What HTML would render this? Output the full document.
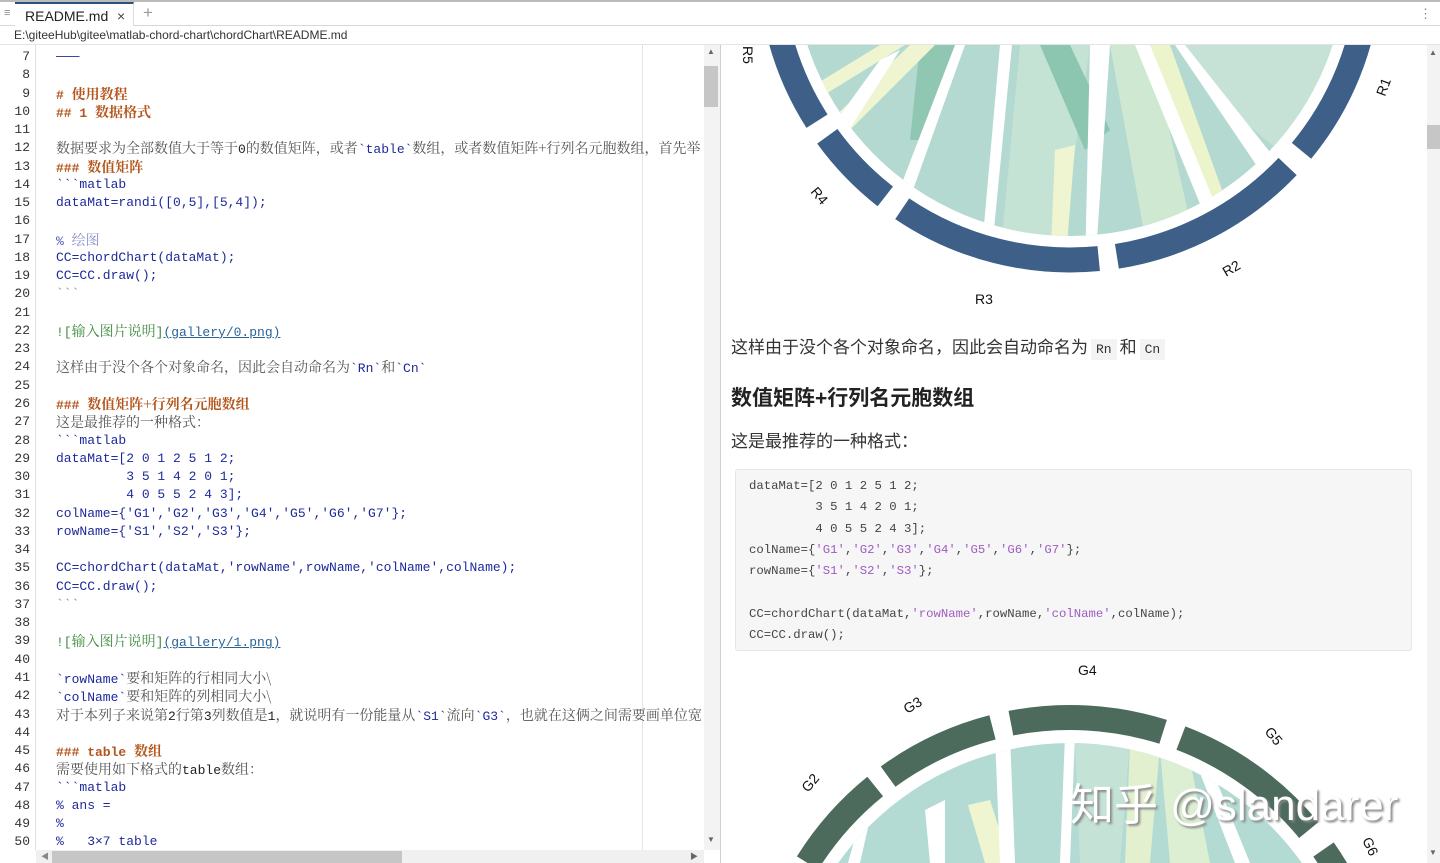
<!DOCTYPE html>
<html><head><meta charset="utf-8">
<style>
*{margin:0;padding:0;box-sizing:border-box}
html,body{width:1440px;height:863px;overflow:hidden}
body{background:#fff;position:relative;font-family:"Liberation Sans","Noto Sans CJK SC",sans-serif}
.abs{position:absolute}
#ed{position:absolute;left:0;top:44px;width:704px;height:806px;overflow:hidden}
.ln{position:absolute;left:0;width:30px;text-align:right;font:13px "Liberation Mono",monospace;color:#333;height:18.26px;line-height:18.26px}
.tx{position:absolute;left:56px;white-space:pre;font:13px "Liberation Mono","Noto Serif CJK SC",monospace;color:#1e2a9c;height:18.26px;line-height:18.26px}
.cn{font-family:"Noto Serif CJK SC",serif;color:#555;font-size:14px}
.h{color:#b4561c;font-weight:bold}
.g{color:#3d8a3d}
.lk{color:#2a6496;text-decoration:underline}
.d{color:#222}
.pre{position:absolute;left:735px;top:469px;width:677px;height:182px;background:#f6f6f6;border:1px solid #e6e6e6;border-radius:3px}
.pl{position:absolute;left:749px;white-space:pre;font:12.3px "Liberation Mono",monospace;color:#444;line-height:21.3px}
.s{color:#a05bc0}
.hc{font-family:'Noto Serif CJK SC',serif;font-size:14px}
</style></head><body>
<div class="abs" style="left:0;top:0;width:1440px;height:2px;background:#bbb"></div>
<div class="abs" style="left:0;top:25px;width:1440px;height:1px;background:#d8d8d8"></div>
<div class="abs" style="left:4px;top:7px;font-size:11px;color:#888">≡</div>
<div class="abs" style="left:15px;top:2px;width:119px;height:24px;border-top:2px solid #2c4f7c;background:#fff;border-right:1px solid #ddd"></div>
<div class="abs" style="left:25px;top:8px;font-size:14px;color:#222">README.md</div>
<div class="abs" style="left:117px;top:8px;font-size:14px;color:#444">×</div>
<div class="abs" style="left:143px;top:3px;font-size:17px;color:#999">+</div>
<div class="abs" style="left:1419px;top:6px;font-size:13px;color:#888">⋮</div>
<div class="abs" style="left:14px;top:28px;font-size:12px;color:#333">E:\giteeHub\gitee\matlab-chord-chart\chordChart\README.md</div>
<div class="abs" style="left:0;top:44px;width:1440px;height:1px;background:#e4e4e4"></div>

<div class="abs" style="left:35px;top:45px;width:1px;height:805px;background:#e0e0e0"></div>
<div class="abs" style="left:642px;top:45px;width:1px;height:805px;background:#e4e4e4"></div>
<div id="ed">
<div class="ln" style="top:4px">7</div><div class="tx" style="top:4px">———</div>
<div class="ln" style="top:22.3px">8</div>
<div class="ln" style="top:40.5px">9</div><div class="tx h" style="top:40.5px"># <span class="hc">使用教程</span></div>
<div class="ln" style="top:58.8px">10</div><div class="tx h" style="top:58.8px">## 1 <span class="hc">数据格式</span></div>
<div class="ln" style="top:77px">11</div>
<div class="ln" style="top:95.3px">12</div><div class="tx" style="top:95.3px"><span class="cn">数据要求为全部数值大于等于</span><span class="d">0</span><span class="cn">的数值矩阵，或者</span>&#96;table&#96;<span class="cn">数组，或者数值矩阵+行列名元胞数组，首先举</span></div>
<div class="ln" style="top:113.6px">13</div><div class="tx h" style="top:113.6px">### <span class="hc">数值矩阵</span></div>
<div class="ln" style="top:131.8px">14</div><div class="tx" style="top:131.8px">&#96;&#96;&#96;matlab</div>
<div class="ln" style="top:150px">15</div><div class="tx" style="top:150px">dataMat=randi([0,5],[5,4]);</div>
<div class="ln" style="top:168.3px">16</div>
<div class="ln" style="top:186.6px">17</div><div class="tx" style="top:186.6px;color:#4a5ab8">% <span class="hc" style="color:#8a90c8">绘图</span></div>
<div class="ln" style="top:204.9px">18</div><div class="tx" style="top:204.9px">CC=chordChart(dataMat);</div>
<div class="ln" style="top:223.1px">19</div><div class="tx" style="top:223.1px">CC=CC.draw();</div>
<div class="ln" style="top:241.4px">20</div><div class="tx" style="top:241.4px;color:#888">&#96;&#96;&#96;</div>
<div class="ln" style="top:259.6px">21</div>
<div class="ln" style="top:277.9px">22</div><div class="tx g" style="top:277.9px">![<span class="hc">输入图片说明</span>]<span class="lk">(gallery/0.png)</span></div>
<div class="ln" style="top:296.2px">23</div>
<div class="ln" style="top:314.4px">24</div><div class="tx" style="top:314.4px"><span class="cn">这样由于没个各个对象命名，因此会自动命名为</span>&#96;Rn&#96;<span class="cn">和</span>&#96;Cn&#96;</div>
<div class="ln" style="top:332.7px">25</div>
<div class="ln" style="top:351px">26</div><div class="tx h" style="top:351px">### <span class="hc">数值矩阵+行列名元胞数组</span></div>
<div class="ln" style="top:369.2px">27</div><div class="tx cn" style="top:369.2px">这是最推荐的一种格式：</div>
<div class="ln" style="top:387.5px">28</div><div class="tx" style="top:387.5px">&#96;&#96;&#96;matlab</div>
<div class="ln" style="top:405.8px">29</div><div class="tx" style="top:405.8px">dataMat=[2 0 1 2 5 1 2;</div>
<div class="ln" style="top:424px">30</div><div class="tx" style="top:424px">         3 5 1 4 2 0 1;</div>
<div class="ln" style="top:442.3px">31</div><div class="tx" style="top:442.3px">         4 0 5 5 2 4 3];</div>
<div class="ln" style="top:460.6px">32</div><div class="tx" style="top:460.6px">colName={'G1','G2','G3','G4','G5','G6','G7'};</div>
<div class="ln" style="top:478.8px">33</div><div class="tx" style="top:478.8px">rowName={'S1','S2','S3'};</div>
<div class="ln" style="top:497.1px">34</div>
<div class="ln" style="top:515.4px">35</div><div class="tx" style="top:515.4px">CC=chordChart(dataMat,'rowName',rowName,'colName',colName);</div>
<div class="ln" style="top:533.6px">36</div><div class="tx" style="top:533.6px">CC=CC.draw();</div>
<div class="ln" style="top:551.9px">37</div><div class="tx" style="top:551.9px;color:#888">&#96;&#96;&#96;</div>
<div class="ln" style="top:570.2px">38</div>
<div class="ln" style="top:588.4px">39</div><div class="tx g" style="top:588.4px">![<span class="hc">输入图片说明</span>]<span class="lk">(gallery/1.png)</span></div>
<div class="ln" style="top:606.7px">40</div>
<div class="ln" style="top:625px">41</div><div class="tx" style="top:625px">&#96;rowName&#96;<span class="cn">要和矩阵的行相同大小\</span></div>
<div class="ln" style="top:643.2px">42</div><div class="tx" style="top:643.2px">&#96;colName&#96;<span class="cn">要和矩阵的列相同大小\</span></div>
<div class="ln" style="top:661.5px">43</div><div class="tx" style="top:661.5px"><span class="cn">对于本列子来说第</span><span class="d">2</span><span class="cn">行第</span><span class="d">3</span><span class="cn">列数值是</span><span class="d">1</span><span class="cn">，就说明有一份能量从</span>&#96;S1&#96;<span class="cn">流向</span>&#96;G3&#96;<span class="cn">，也就在这俩之间需要画单位宽</span></div>
<div class="ln" style="top:679.8px">44</div>
<div class="ln" style="top:698px">45</div><div class="tx h" style="top:698px">### table <span class="hc">数组</span></div>
<div class="ln" style="top:716.3px">46</div><div class="tx" style="top:716.3px"><span class="cn">需要使用如下格式的</span><span class="d">table</span><span class="cn">数组：</span></div>
<div class="ln" style="top:734.6px">47</div><div class="tx" style="top:734.6px">&#96;&#96;&#96;matlab</div>
<div class="ln" style="top:752.8px">48</div><div class="tx" style="top:752.8px">% ans =</div>
<div class="ln" style="top:771.1px">49</div><div class="tx" style="top:771.1px">%</div>
<div class="ln" style="top:789.4px">50</div><div class="tx" style="top:789.4px">%   3×7 table</div>
</div>
<div class="abs" style="left:704px;top:45px;width:16px;height:805px;background:#f3f3f3"></div>
<div class="abs" style="left:704px;top:66px;width:14px;height:41px;background:#c6c6c6"></div>
<div class="abs" style="left:707px;top:47px;font-size:8px;color:#666">▲</div>
<div class="abs" style="left:707px;top:835px;font-size:8px;color:#666">▼</div>
<div class="abs" style="left:36px;top:850px;width:668px;height:13px;background:#f0f0f0"></div>
<div class="abs" style="left:52px;top:851px;width:350px;height:12px;background:#c6c6c6"></div>
<div class="abs" style="left:41px;top:851px;font-size:8px;color:#888">◀</div>
<div class="abs" style="left:690px;top:851px;font-size:8px;color:#666">▶</div>
<div class="abs" style="left:720px;top:45px;width:1px;height:818px;background:#d0d0d0"></div>

<div class="abs" style="left:1427px;top:45px;width:13px;height:818px;background:#f3f3f3"></div>
<div class="abs" style="left:1427px;top:125px;width:13px;height:24px;background:#c6c6c6"></div>
<div class="abs" style="left:1429px;top:48px;font-size:8px;color:#666">▲</div>
<div class="abs" style="left:1429px;top:848px;font-size:8px;color:#666">▼</div>

<svg class="abs" style="left:0;top:0" width="1427" height="863" viewBox="0 0 1427 863">
<defs>
<clipPath id="ct"><path d="M721 45H1427V863H721Z"/></clipPath>
<clipPath id="c1"><circle cx="1070" cy="-40" r="276"/></clipPath>
<clipPath id="c2"><circle cx="1070" cy="1027" r="284"/></clipPath>
</defs>
<g clip-path="url(#ct)">
<g clip-path="url(#c1)">
<rect x="780" y="40" width="600" height="240" fill="#b3d9d1"/>
<path d="M1180 45L1340 45L1290 160L1230 110Z" fill="#c6e2d6"/>
<path d="M1020 45L1090 45L1060 260L1000 260Z" fill="#c4e3d4"/>
<path d="M1110 45L1150 45L1200 265L1150 265Z" fill="#cfe8d2"/>
<path d="M1150 45L1170 45L1240 240L1220 240Z" fill="#ecf4cc"/>
<path d="M1040 45L1070 45L1110 130L1085 150Z" fill="#8cc6b0"/>
<path d="M920 45L960 45L930 140L910 140Z" fill="#8fc7b2"/>
<path d="M910 45L935 45L830 150L810 140Z" fill="#eef5d0"/>
<path d="M880 45L905 45L800 110L790 100Z" fill="#eef5d0"/>
<path d="M1055 150L1075 145L1065 270L1050 270Z" fill="#eef5d0"/>
<path d="M1090 45L1110 45L1095 270L1085 270Z" fill="#fff"/>
<path d="M955 45L965 45L895 240L880 240Z" fill="#fff"/>
<path d="M1000 45L1012 45L990 270L980 270Z" fill="#fff"/>
<path d="M1135 45L1150 45L1240 265L1225 265Z" fill="#fff"/>
<path d="M1175 45L1185 45L1300 190L1280 200Z" fill="#fff"/>
<path d="M880 60L900 50L830 160L815 150Z" fill="#fff"/>
</g>
<g fill="none" stroke-width="25">
<path d="M1365.4 -92.1A300 300 0 0 1 1301.5 150.8" stroke="#3d5f88"/>
<path d="M1287.6 166.5A300 300 0 0 1 1116.9 256.3" stroke="#3d5f88"/>
<path d="M1098.7 258.6A300 300 0 0 1 902.2 208.7" stroke="#3d5f88"/>
<path d="M885.3 196.4A300 300 0 0 1 827.3 136.3" stroke="#3d5f88"/>
<path d="M817 121.2A300 300 0 0 1 771.1 -66.1" stroke="#3d5f88"/>
</g>
<g font-family="Liberation Sans" font-size="14" fill="#111">
<text x="0" y="0" transform="translate(1385 97) rotate(-70)">R1</text>
<text x="0" y="0" transform="translate(1226 277) rotate(-30)">R2</text>
<text x="975" y="304">R3</text>
<text x="0" y="0" transform="translate(810 192) rotate(50)">R4</text>
<text x="0" y="0" transform="translate(743 46) rotate(90)">R5</text>
</g>
<g clip-path="url(#c2)">
<rect x="780" y="735" width="600" height="130" fill="#b3dbd3"/>
<path d="M1075 740L1130 740L1120 863L1080 863Z" fill="#c4e2d6"/>
<path d="M1130 745L1160 745L1150 863L1125 863Z" fill="#e3f0cf"/>
<path d="M1160 750L1190 760L1210 863L1170 863Z" fill="#dcefd2"/>
<path d="M968 805L990 800L1010 863L985 863Z" fill="#eef5d0"/>
<path d="M925 810L945 800L945 863L930 863Z" fill="#fff"/>
<path d="M995 735L1010 735L1015 863L1000 863Z" fill="#fff"/>
<path d="M1065 735L1075 735L1070 863L1060 863Z" fill="#fff"/>
<path d="M1195 760L1210 765L1250 863L1235 863Z" fill="#fff"/>
<path d="M860 820L872 810L860 863L848 863Z" fill="#fff"/>
</g>
<g fill="none" stroke-width="25">
<path d="M1323.5 849.5A309.5 309.5 0 0 1 1374.8 1080.7" stroke="#4c6b5c"/>
<path d="M1180.9 738.1A309.5 309.5 0 0 1 1308.8 830.1" stroke="#4c6b5c"/>
<path d="M1010.9 723.2A309.5 309.5 0 0 1 1163.1 731.8" stroke="#4c6b5c"/>
<path d="M888.1 776.6A309.5 309.5 0 0 1 992.5 727.4" stroke="#4c6b5c"/>
<path d="M807.5 863A309.5 309.5 0 0 1 875.2 786.5" stroke="#4c6b5c"/>
<path d="M779.2 1132.8A309.5 309.5 0 0 1 799.3 877" stroke="#4c6b5c"/>
</g>
<g font-family="Liberation Sans" font-size="14" fill="#111">
<text x="1078" y="675">G4</text>
<text x="0" y="0" transform="translate(907 714) rotate(-30)">G3</text>
<text x="0" y="0" transform="translate(808 793) rotate(-50)">G2</text>
<text x="0" y="0" transform="translate(1264 732) rotate(50)">G5</text>
<text x="0" y="0" transform="translate(1362 840) rotate(65)">G6</text>
</g>
</g>
</svg>
<div class="abs" style="left:1070px;top:776px;height:60px;font-size:44px;line-height:60px;color:#fff;text-shadow:2px 2px 2px #888;white-space:nowrap;font-family:'Liberation Sans','Noto Sans CJK SC',sans-serif">知乎 @slandarer</div>

<div class="abs" style="left:731px;top:333px;font-size:17px;color:#333;white-space:nowrap">这样由于没个各个对象命名，因此会自动命名为<span style="font:13px 'Liberation Mono',monospace;background:#f3f3f3;padding:3px 5px;margin:0 3px">Rn</span>和<span style="font:13px 'Liberation Mono',monospace;background:#f3f3f3;padding:3px 5px;margin:0 3px">Cn</span></div>
<div class="abs" style="left:731px;top:382px;font-size:21px;font-weight:bold;color:#222;white-space:nowrap">数值矩阵+行列名元胞数组</div>
<div class="abs" style="left:731px;top:427px;font-size:17px;color:#333;white-space:nowrap">这是最推荐的一种格式：</div>
<div class="pre"></div>
<div class="pl" style="top:476px">dataMat=[2 0 1 2 5 1 2;
         3 5 1 4 2 0 1;
         4 0 5 5 2 4 3];
colName={<span class="s">'G1'</span>,<span class="s">'G2'</span>,<span class="s">'G3'</span>,<span class="s">'G4'</span>,<span class="s">'G5'</span>,<span class="s">'G6'</span>,<span class="s">'G7'</span>};
rowName={<span class="s">'S1'</span>,<span class="s">'S2'</span>,<span class="s">'S3'</span>};

CC=chordChart(dataMat,<span class="s">'rowName'</span>,rowName,<span class="s">'colName'</span>,colName);
CC=CC.draw();</div>
</body></html>
